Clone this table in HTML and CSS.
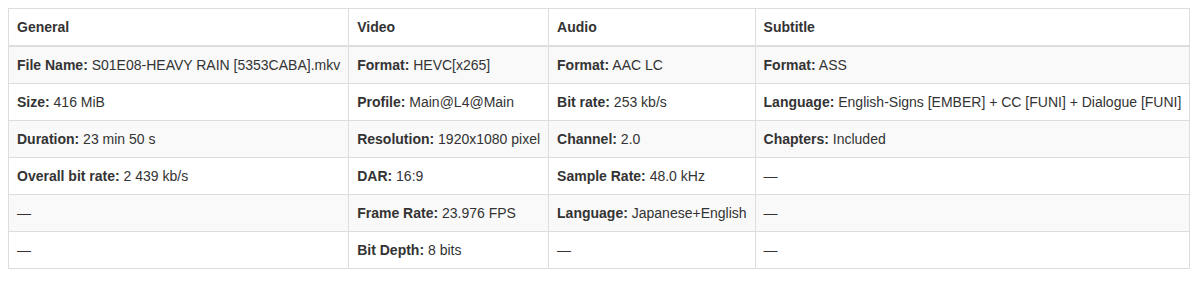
FILE: index.html
```html
<!DOCTYPE html>
<html>
<head>
<meta charset="utf-8">
<link rel="stylesheet" href="styles.css">
</head>
<body>
<table class="info">
  <thead>
    <tr><th>General</th><th>Video</th><th>Audio</th><th>Subtitle</th></tr>
  </thead>
  <tbody>
    <tr>
      <td><b>File Name:</b> S01E08-HEAVY RAIN [5353CABA].mkv</td>
      <td><b>Format:</b> HEVC[x265]</td>
      <td><b>Format:</b> AAC LC</td>
      <td><b>Format:</b> ASS</td>
    </tr>
    <tr>
      <td><b>Size:</b> 416 MiB</td>
      <td><b>Profile:</b> Main@L4@Main</td>
      <td><b>Bit rate:</b> 253 kb/s</td>
      <td><b>Language:</b> English-Signs [EMBER] + CC [FUNI] + Dialogue [FUNI]</td>
    </tr>
    <tr>
      <td><b>Duration:</b> 23 min 50 s</td>
      <td><b>Resolution:</b> 1920x1080 pixel</td>
      <td><b>Channel:</b> 2.0</td>
      <td><b>Chapters:</b> Included</td>
    </tr>
    <tr>
      <td><b>Overall bit rate:</b> 2 439 kb/s</td>
      <td><b>DAR:</b> 16:9</td>
      <td><b>Sample Rate:</b> 48.0 kHz</td>
      <td>—</td>
    </tr>
    <tr>
      <td>—</td>
      <td><b>Frame Rate:</b> 23.976 FPS</td>
      <td><b>Language:</b> Japanese+English</td>
      <td>—</td>
    </tr>
    <tr>
      <td>—</td>
      <td><b>Bit Depth:</b> 8 bits</td>
      <td>—</td>
      <td>—</td>
    </tr>
  </tbody>
</table>
</body>
</html>
```
FILE: styles.css
```css
html, body {
  margin: 0;
  padding: 0;
  background: #fff;
}
body {
  margin: 8px;
  font-family: "Liberation Sans", Arial, Helvetica, sans-serif;
  font-size: 14px;
  line-height: 20px;
  color: #333;
}
.info {
  border-collapse: collapse;
  border-spacing: 0;
  border: 1px solid #ddd;
}
.info th,
.info td {
  padding: 8px;
  border: 1px solid #ddd;
  text-align: left;
  vertical-align: top;
  white-space: nowrap;
}
.info th {
  font-weight: bold;
  border-bottom: 2px solid #ddd;
}
.info td b {
  font-weight: bold;
}
.info tbody tr:nth-child(odd) {
  background: #f9f9f9;
}
```
